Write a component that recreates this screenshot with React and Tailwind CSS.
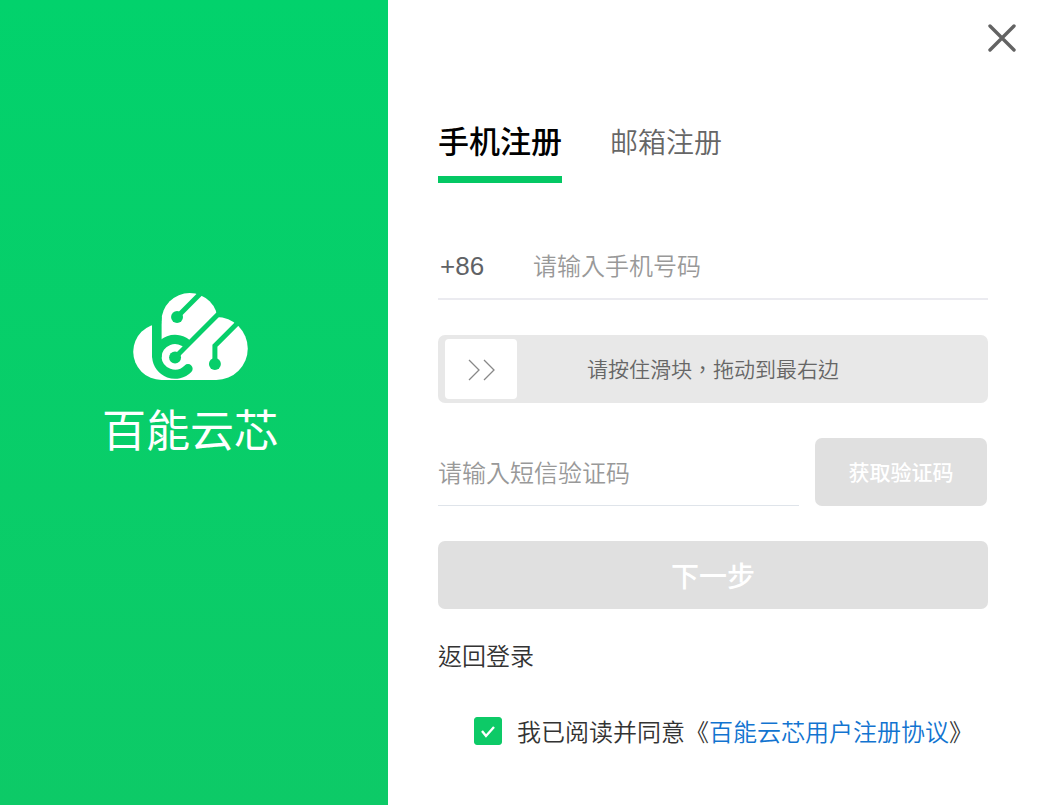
import { useState } from "react";

const CloudLogo = () => (
  <svg viewBox="130 38 345 262" className="h-[87px] w-[115px]" aria-hidden="true">
    <defs>
      <mask id="circuit" maskUnits="userSpaceOnUse" x="120" y="20" width="370" height="300">
        <rect x="120" y="20" width="370" height="300" fill="white" />
        <g fill="none" stroke="black" strokeWidth="15">
          <path d="M262 110L345 27" />
          <path d="M256 232L400 88" />
          <path d="M376 252V197L455 118" />
          <path d="M201 110V232" strokeWidth="29" />
          <path d="M297 196A55 55 0 0 0 201 232" strokeWidth="28" />
          <path
            d="M201 232A55 55 0 0 0 295 266"
            strokeWidth="28"
            strokeLinecap="round"
          />
        </g>
        <circle cx="262" cy="110" r="18" fill="black" />
        <circle cx="256" cy="232" r="18" fill="black" />
        <circle cx="376" cy="252" r="18" fill="black" />
      </mask>
    </defs>
    <g fill="white" mask="url(#circuit)">
      <circle cx="300" cy="123" r="85" />
      <circle cx="215" cy="215" r="85" />
      <circle cx="380" cy="205" r="95" />
      <rect x="215" y="123" width="165" height="177" />
    </g>
  </svg>
);

const tabs = [
  { id: "phone", label: "手机注册" },
  { id: "email", label: "邮箱注册" },
];

const App = () => {
  const [tab, setTab] = useState("phone");
  const [phone, setPhone] = useState("");
  const [code, setCode] = useState("");
  const [agreed, setAgreed] = useState(true);

  return (
    <div className="flex min-h-screen bg-white font-['Noto_Sans_CJK_TC',sans-serif]">
      <aside className="mb-px flex w-[388px] shrink-0 flex-col items-center bg-linear-to-b from-[#02d26c] to-[#0dca67] pt-[293px] pr-2">
        <CloudLogo />
        <p className="mt-[18px] text-[44px] leading-[60px] text-white">百能云芯</p>
      </aside>

      <main className="min-w-0 flex-1">
        <div className="flex h-[76px] items-center justify-end pr-6">
          <button type="button" aria-label="关闭">
            <svg viewBox="0 0 28 28" className="size-7" aria-hidden="true">
              <path
                d="M2 2L26 26M26 2L2 26"
                fill="none"
                stroke="#636363"
                strokeWidth="3.4"
                strokeLinecap="round"
              />
            </svg>
          </button>
        </div>

        <form
          className="pt-[42px] pr-[52px] pl-[50px]"
          onSubmit={(e) => e.preventDefault()}
        >
          <div className="flex items-start gap-12">
            {tabs.map(({ id, label }) => (
              <button
                key={id}
                type="button"
                onClick={() => setTab(id)}
                className={
                  tab === id
                    ? "border-b-[7px] border-[#04c864] pb-3.5 text-[31px] leading-[44px] font-medium text-black"
                    : "text-[28px] leading-[46px] font-[350] text-[#666666]"
                }
              >
                {label}
              </button>
            ))}
          </div>

          <div className="mt-[52px] flex h-[65px] items-center border-b-2 border-[#ebebf0]">
            <label
              htmlFor="phone"
              className="w-[95px] pl-0.5 font-['Liberation_Sans',sans-serif] text-[26px] text-[#606266]"
            >
              +86
            </label>
            <input
              id="phone"
              type="tel"
              placeholder="请输入手机号码"
              value={phone}
              onChange={(e) => setPhone(e.target.value)}
              className="h-full min-w-0 flex-1 pb-1 text-2xl font-[350] outline-none placeholder:text-[#999999]"
            />
          </div>

          <div className="relative mt-[35px] h-[68px] rounded-[7px] bg-[#e8e8e8]">
            <input
              id="slide"
              type="range"
              defaultValue="0"
              className="h-full w-full appearance-none bg-transparent px-[7px] [&::-webkit-slider-thumb]:h-[60px] [&::-webkit-slider-thumb]:w-[72px] [&::-webkit-slider-thumb]:appearance-none [&::-webkit-slider-thumb]:rounded [&::-webkit-slider-thumb]:bg-white"
            />
            <svg
              viewBox="0 0 28 22"
              className="pointer-events-none absolute top-6 left-[30px] h-[22px] w-7"
              aria-hidden="true"
            >
              <path
                d="M1 1L11 11L1 21M16 1L26 11L16 21"
                fill="none"
                stroke="#888888"
                strokeWidth="1.3"
              />
            </svg>
            <label
              htmlFor="slide"
              className="pointer-events-none absolute inset-0 flex items-center justify-center text-[21px] font-[350] text-[#666666]"
            >
              请按住滑块，拖动到最右边
            </label>
          </div>

          <div className="mt-[35px] flex gap-4 pr-px">
            <input
              type="text"
              aria-label="短信验证码"
              placeholder="请输入短信验证码"
              value={code}
              onChange={(e) => setCode(e.target.value)}
              className="h-[68px] min-w-0 flex-1 border-b border-[#dfe4ea] text-2xl font-[350] outline-none placeholder:text-[#999999]"
            />
            <button
              type="button"
              className="h-[68px] w-[172px] rounded-[7px] bg-[#e0e0e0] text-[21px] font-medium text-white"
            >
              获取验证码
            </button>
          </div>

          <button
            type="submit"
            className="mt-[35px] h-[68px] w-full rounded-[7px] bg-[#e0e0e0] text-[28px] font-medium text-white"
          >
            下一步
          </button>

          <a href="#login" className="mt-7 block w-fit text-2xl leading-9 font-[350] text-[#333333]">
            返回登录
          </a>

          <div className="mt-10 flex h-9 items-center gap-[15px] pl-9 text-2xl font-[350] whitespace-nowrap text-[#333333]">
            <span className="relative size-7 shrink-0">
              <input
                id="agree"
                type="checkbox"
                checked={agreed}
                onChange={(e) => setAgreed(e.target.checked)}
                className="peer block size-7 appearance-none rounded-[3px] border border-[#cccccc] checked:border-[#0dca67] checked:bg-[#0dca67]"
              />
              <svg
                viewBox="0 0 28 28"
                className="pointer-events-none absolute inset-0 hidden size-7 peer-checked:block"
                aria-hidden="true"
              >
                <path d="M8 14L12 19L20 10" fill="none" stroke="white" strokeWidth="2.4" />
              </svg>
            </span>
            <span>
              <label htmlFor="agree">我已阅读并同意</label>《
              <a href="#agreement" className="text-[#1274d0]">
                百能云芯用户注册协议
              </a>
              》
            </span>
          </div>
        </form>
      </main>
    </div>
  );
};

export default App;
